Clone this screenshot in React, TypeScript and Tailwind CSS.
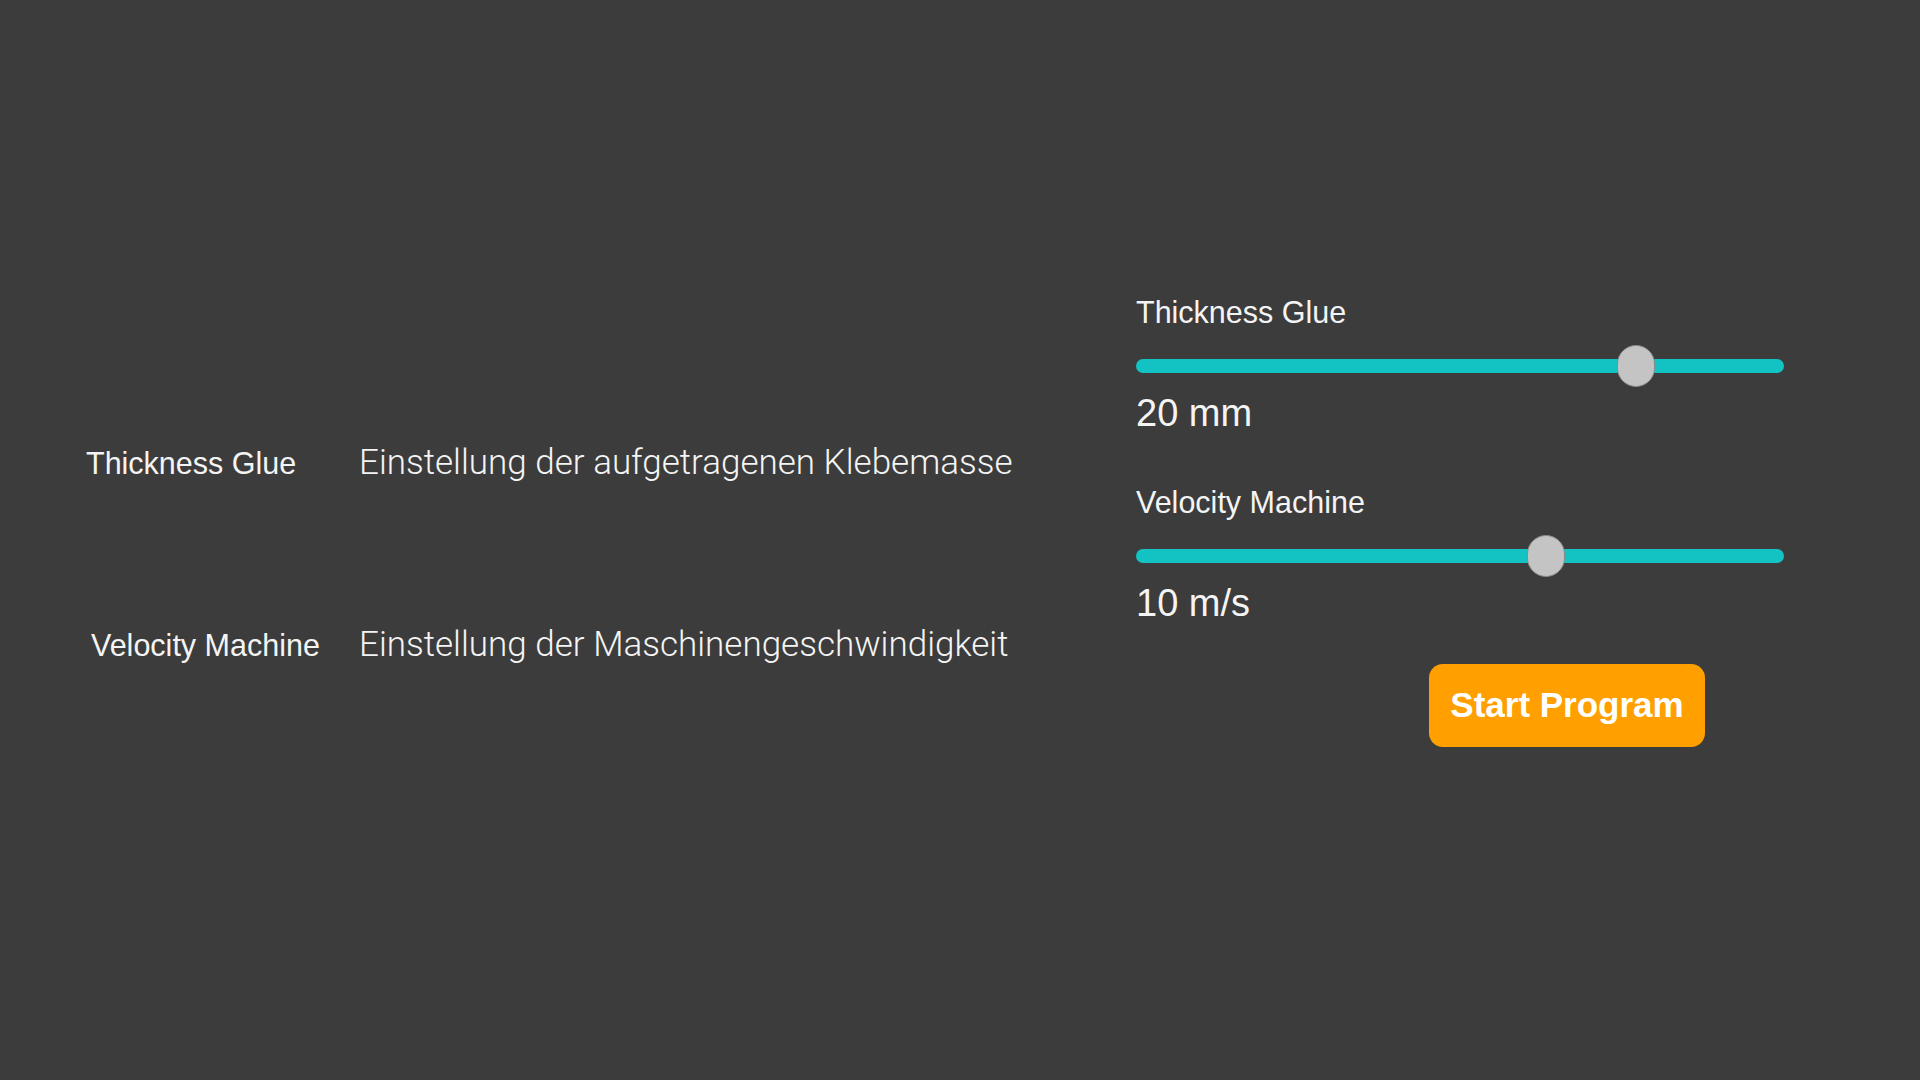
import { useState } from "react";

type SliderProps = {
    label: string;
    value: number;
    min: number;
    max: number;
    unit: string;
};

function Slider({ label, value, min, max, unit }: SliderProps) {
    const pct = ((value - min) / (max - min)) * 100;
    return (
        <div className="flex flex-col">
            <p className="text-[30.5px] leading-[36px]">{label}</p>
            <div className="relative mt-[15px] h-[42px] w-[648px] flex items-center">
                <div className="h-[14px] w-full rounded-full bg-[#13c3c3]" />
                <div
                    className="absolute top-0 h-[42px] w-[38px] -ml-[19px] rounded-full bg-[#c4c4c4] border border-[#8a8a8a]"
                    style={{ left: `${pct}%` }}
                />
            </div>
            <p className="mt-[4px] text-[38px] leading-[44px]">
                {value} {unit}
            </p>
        </div>
    );
}

export default function App() {
    const [thickness] = useState(20);
    const [velocity] = useState(10);

    return (
        <div className="min-h-screen w-full bg-[#3c3c3c] text-[#f4f4f4] flex font-['Liberation_Sans',Arial,sans-serif]">
            <div className="pl-[86px] pt-[443px]">
                <div className="grid grid-cols-[273px_auto] gap-y-[142px]">
                    <p className="text-[30.5px] leading-[40px]">Thickness Glue</p>
                    <p className="font-['Roboto',sans-serif] font-light text-[35px] leading-[40px]">
                        Einstellung der aufgetragenen Klebemasse
                    </p>
                    <p className="pl-[5px] text-[30.5px] leading-[40px]">Velocity Machine</p>
                    <p className="font-['Roboto',sans-serif] font-light text-[35px] leading-[40px]">
                        Einstellung der Maschinengeschwindigkeit
                    </p>
                </div>
            </div>
            <div className="ml-auto mr-[136px] pt-[294px] flex flex-col">
                <Slider label="Thickness Glue" value={thickness} min={0} max={25.9} unit="mm" />
                <div className="mt-[49px]">
                    <Slider label="Velocity Machine" value={velocity} min={0} max={15.8} unit="m/s" />
                </div>
                <button className="ml-[293px] mt-[39px] h-[83px] w-[276px] rounded-[14px] bg-[#ffa000] text-white font-bold text-[35px]">
                    Start Program
                </button>
            </div>
        </div>
    );
}
